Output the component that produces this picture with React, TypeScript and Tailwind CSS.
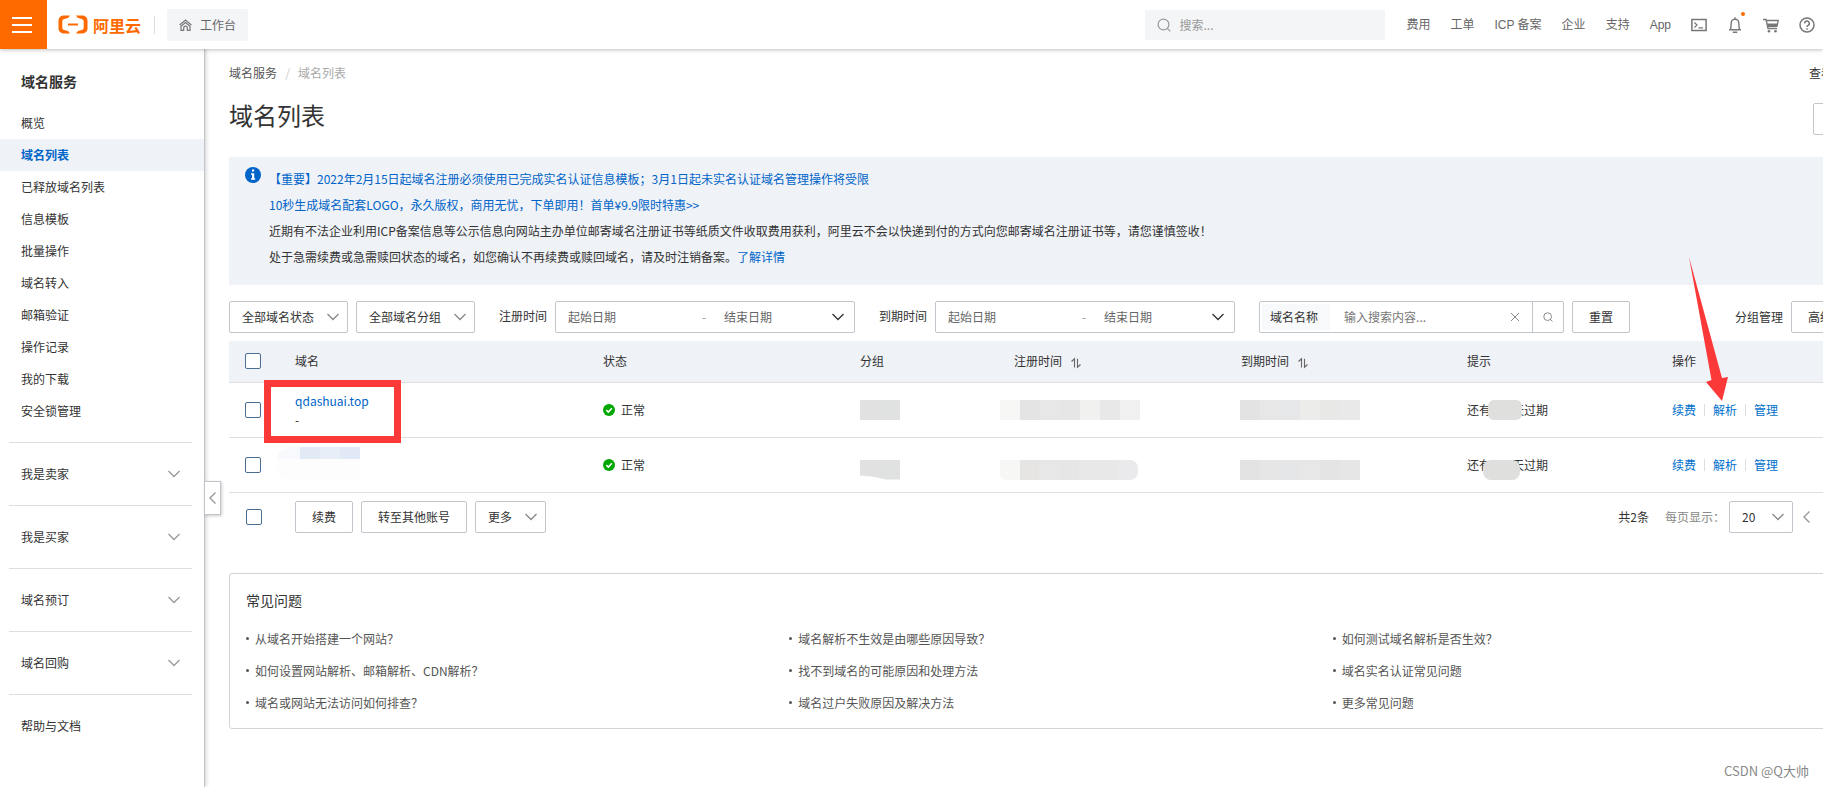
import React from "react";

const menu = ["概览", "域名列表", "已释放域名列表", "信息模板", "批量操作", "域名转入", "邮箱验证", "操作记录", "我的下载", "安全锁管理"];
const groups = ["我是卖家", "我是买家", "域名预订", "域名回购"];
const topLinks = ["费用", "工单", "ICP 备案", "企业", "支持", "App"];
const faq = [
  ["从域名开始搭建一个网站？", "如何设置网站解析、邮箱解析、CDN解析？", "域名或网站无法访问如何排查？"],
  ["域名解析不生效是由哪些原因导致？", "找不到域名的可能原因和处理方法", "域名过户失败原因及解决方法"],
  ["如何测试域名解析是否生效？", "域名实名认证常见问题", "更多常见问题"],
];

type IconProps = { className?: string };

function Chevron({ className = "text-[#888]" }: IconProps) {
  return (
    <svg className={"pointer-events-none h-3 w-3 shrink-0 " + className} viewBox="0 0 12 12" fill="none" stroke="currentColor" strokeWidth="1.3">
      <path d="M.5 3 6 8.5 11.5 3" />
    </svg>
  );
}

function ChevronLeft({ className = "text-[#999]" }: IconProps) {
  return (
    <svg className={"h-3 w-3 shrink-0 " + className} viewBox="0 0 12 12" fill="none" stroke="currentColor" strokeWidth="1.4">
      <path d="M8.5.5 3 6l5.500 5.500" />
    </svg>
  );
}

function Search({ className = "" }: IconProps) {
  return (
    <svg className={className} viewBox="0 0 14 14" fill="none" stroke="currentColor" strokeWidth="1.2">
      <circle cx="6.500" cy="6.500" r="5.400" />
      <path d="M10.300 10.300 13.300 13.300" />
    </svg>
  );
}

function Home() {
  return (
    <svg className="h-3 w-[13px]" viewBox="0 0 13 12" fill="none" stroke="#777" strokeWidth="1.200">
      <path d="M.6 6 6.500 1l5.900 5" />
      <path d="M2 7.200 6.500 3.600 11 7.200M2 6.500v4.800h2.700V9a1.800 1.800 0 0 1 3.600 0v2.300H11V6.500" />
    </svg>
  );
}

function Checkbox({ label }: { label: string }) {
  return (
    <input
      type="checkbox"
      aria-label={label}
      className="block h-4 w-4 appearance-none rounded-[2px] border border-[#4a6d92] bg-white checked:bg-[#0064c8]"
    />
  );
}

function Dropdown({ label, options, className }: { label: string; options: string[]; className: string }) {
  return (
    <div className={"relative flex items-center " + className}>
      <select aria-label={label} className="h-8 w-full appearance-none rounded-[2px] border border-[#c0c6cc] bg-white pl-3 text-[#333]">
        {options.map((o) => (
          <option key={o}>{o}</option>
        ))}
      </select>
      <Chevron className="absolute right-[9px] text-[#888]" />
    </div>
  );
}

function DateRange({ label, id }: { label: string; id: string }) {
  return (
    <div className="ml-6 flex items-center gap-2">
      <label htmlFor={id} className="pb-0.5">{label}</label>
      <div className="flex h-8 w-[300px] items-center rounded-[2px] border border-[#c0c6cc] bg-white pr-2.5 pl-3">
        <input id={id} placeholder="起始日期" className="w-[134px] outline-none placeholder:text-[#666]" />
        <span className="w-[22px] text-[#999]">-</span>
        <input aria-label={label + "结束日期"} placeholder="结束日期" className="w-0 grow outline-none placeholder:text-[#666]" />
        <Chevron className="text-[#333]" />
      </div>
    </div>
  );
}

function Mosaic({ colors, className }: { colors: string[]; className: string }) {
  return (
    <span className={"absolute flex h-5 overflow-hidden " + className}>
      {colors.map((c, i) => (
        <span key={i} className="h-5 w-5" style={{ background: c }} />
      ))}
    </span>
  );
}

function Sort() {
  return (
    <svg className="ml-2 inline h-3 w-3" viewBox="0 0 12 12" fill="none" stroke="#666" strokeWidth="1.100">
      <path d="M1.500 4.500 4.500 1.800V10.500M7.500 1.800v8.400l3-2.700" />
    </svg>
  );
}

type Row = {
  name: React.ReactNode;
  group: React.ReactNode;
  created: React.ReactNode;
  expires: React.ReactNode;
  hint: string;
};

const rows: Row[] = [
  {
    name: (
      <div className="leading-[19px]">
        <a href="#domain" className="text-[#0064c8]">qdashuai.top</a>
        <div>-</div>
      </div>
    ),
    group: <Mosaic className="top-[17px] left-4" colors={["#e1e1e1", "#dfe2e1"]} />,
    created: <Mosaic className="top-[17px] left-0.5" colors={["#f7f7f5", "#e4e4e4", "#e7e7e7", "#e6e6e6", "#f1f1ef", "#e8e8e8", "#f0f0f0"]} />,
    expires: <Mosaic className="top-[17px] left-[15px]" colors={["#e3e3e3", "#e7e7e7", "#e6e7e9", "#ececea", "#e8e8e6", "#e9e9e9"]} />,
    hint: "top-[17px] left-[37px] w-[34px] rounded-md",
  },
  {
    name: (
      <span className="absolute top-[9px] -left-[3px] flex h-[34px] w-[84px] flex-wrap overflow-hidden rounded-l-2xl bg-[#fdfdfe]">
        <span className="h-3 w-6 bg-[#f7f9fd]" />
        <span className="h-3 w-5 bg-[#e2eaf6]" />
        <span className="h-3 w-5 bg-[#e8eef8]" />
        <span className="h-3 w-5 bg-[#e1e9f6]" />
      </span>
    ),
    group: (
      <span className="absolute top-[22px] left-4 flex h-5 [clip-path:polygon(0_0,100%_0,100%_100%,65%_100%,30%_85%,0_80%)]">
        <span className="h-5 w-5 bg-[#e1e1e1]" />
        <span className="h-5 w-5 bg-[#dfe2e1]" />
      </span>
    ),
    created: <Mosaic className="top-[22px] left-0.5 w-[138px] rounded-r-lg rounded-bl-md" colors={["#f7f7f5", "#e6e5e3", "#e7e7e7", "#e6e6e6", "#e8e8e8", "#e8e8e8", "#eaeaec"]} />,
    expires: <Mosaic className="top-[22px] left-[15px]" colors={["#e3e3e3", "#e6e6e6", "#e5e6e8", "#e7e7e7", "#e4e4e4", "#e6e6e6"]} />,
    hint: "top-[22px] left-8 w-[37px] rounded-lg",
  },
];

const button = "h-8 rounded-[2px] border border-[#c0c6cc] bg-white text-[#333]";

export default function App() {
  return (
    <div className="relative flex min-h-screen flex-col overflow-hidden bg-white font-['Noto_Sans_CJK_SC','Noto_Sans',sans-serif] text-xs text-[#333]">
      <header className="z-20 flex h-[49px] shrink-0 items-center bg-white text-[#666] shadow-[0_1px_4px_rgba(0,0,0,0.25)]">
        <button aria-label="菜单" className="flex h-full w-[47px] flex-col items-start justify-center gap-[5px] bg-[#ff6a00] pl-3">
          <span className="h-0.5 w-5 bg-white" />
          <span className="h-0.5 w-5 bg-white" />
          <span className="h-0.5 w-5 bg-white" />
        </button>
        <a href="#home" className="ml-[11px] flex items-center gap-[5px] text-[#ff6a00]">
          <svg className="h-[19px] w-[30px]" viewBox="0 0 30 19" fill="currentColor">
            <path d="M12 .5H5.500A5 5 0 0 0 .5 5.500v8a5 5 0 0 0 5 5H12l-1.600-2.300-4.700-1.400A2 2 0 0 1 4.300 13V6a2 2 0 0 1 1.400-1.800l4.700-1.400Z" />
            <path d="M18 .5h6.500a5 5 0 0 1 5 5v8a5 5 0 0 1-5 5H18l1.600-2.300 4.700-1.400a2 2 0 0 0 1.400-1.800V6a2 2 0 0 0-1.400-1.800l-4.700-1.400Z" />
            <path d="M10 8.500h10v2H10z" />
          </svg>
          <span className="text-base leading-6 font-bold">阿里云</span>
        </a>
        <span className="ml-[13px] h-[18px] w-px bg-[#ddd]" />
        <a href="#workbench" className="ml-3 flex h-8 items-center gap-2 rounded-[2px] bg-[#f4f5f7] px-3">
          <Home />
          工作台
        </a>
        <label className="ml-auto flex h-[30px] w-60 items-center gap-2 bg-[#f4f5f7] pl-3 text-[#999]">
          <Search className="h-3.5 w-3.5" />
          <input aria-label="搜索" placeholder="搜索..." className="w-0 grow bg-transparent outline-none placeholder:text-[#999]" />
        </label>
        <nav className="ml-[21px] flex items-center gap-5 font-['Liberation_Sans','Noto_Sans_CJK_SC',sans-serif]">
          {topLinks.map((t) => (
            <a key={t} href="#top">{t}</a>
          ))}
        </nav>
        <div className="mr-2 ml-5 flex items-center gap-5">
          <button aria-label="Cloud Shell">
            <svg className="block h-4 w-4" viewBox="0 0 16 16" fill="none" stroke="#777" strokeWidth="1.500">
              <path d="M.9 2.500h14.200v11H.9z" />
              <path d="M3.500 5.500 6 8l-2.500 2.500M7.500 10.800h4.500" strokeWidth="1.200" />
            </svg>
          </button>
          <button aria-label="消息" className="relative">
            <svg className="block h-4 w-4" viewBox="0 0 16 16" fill="none" stroke="#777" strokeWidth="1.400">
              <path d="M2 12.700h12M3.700 12.500 4.200 6a3.800 3.800 0 0 1 7.600 0l.5 6.500M8 .3v2M5.700 15.200h4.600" />
            </svg>
            <span className="absolute -top-[5px] -right-[2px] h-1 w-1 rounded-full bg-[#ff6a00]" />
          </button>
          <button aria-label="购物车">
            <svg className="block h-4 w-4" viewBox="0 0 16 16" fill="none" stroke="#777" strokeWidth="1.300">
              <path d="M0 2.500h3l2 9h9M3.500 3.500h11.700L14 9.500" />
              <path d="M4 6.500h10.500L13.800 10H5z" fill="#777" stroke="none" />
              <circle cx="6" cy="14.300" r="1.300" fill="#777" stroke="none" />
              <circle cx="12.500" cy="14.300" r="1.300" fill="#777" stroke="none" />
            </svg>
          </button>
          <button aria-label="帮助">
            <svg className="block h-4 w-4" viewBox="0 0 16 16" fill="none" stroke="#777" strokeWidth="1.500">
              <circle cx="8" cy="8" r="7" />
              <path d="M5.700 6.400a2.300 2.300 0 1 1 3.400 1.900Q8 8.900 8 10M8 11.200v1.500" />
            </svg>
          </button>
        </div>
      </header>

      <div className="flex grow">
        <aside className="relative w-[205px] shrink-0 border-r border-[#c0c6cc] shadow-[1px_0_4px_rgba(0,0,0,0.2)]">
          <h2 className="mt-[21px] px-[21px] text-sm leading-[22px] font-bold">域名服务</h2>
          <ul className="mt-[15px]">
            {menu.map((m, i) => (
              <li key={m}>
                <a
                  href="#menu"
                  className={i === 1 ? "block bg-[#eff2f7] px-[21px] leading-8 font-bold text-[#0064c8]" : "block px-[21px] leading-8"}
                >
                  {m}
                </a>
              </li>
            ))}
          </ul>
          <div className="mt-[15px] mr-3 ml-[9px]">
            {groups.map((g) => (
              <button key={g} className="flex h-[63px] w-full items-center justify-between border-t border-[#dedede] pr-3 pl-3">
                {g}
                <Chevron className="text-[#999]" />
              </button>
            ))}
            <a href="#help" className="flex h-[63px] items-center border-t border-[#dedede] pl-3">帮助与文档</a>
          </div>
          <button
            aria-label="收起菜单"
            className="absolute top-[432px] -right-[17px] flex h-[34px] w-[17px] items-center justify-center border border-[#c0c6cc] bg-white shadow-[1px_1px_3px_rgba(0,0,0,0.2)]"
          >
            <ChevronLeft />
          </button>
        </aside>

        <main className="w-0 grow overflow-hidden pl-6">
          <div className="min-w-[1664px]">
            <div className="mt-4 flex items-center leading-4">
              <a href="#service" className="text-[#555]">域名服务</a>
              <span className="w-[21px] text-center text-[#ccc]">/</span>
              <span className="text-[#aaa]">域名列表</span>
              <a href="#lookup" className="mr-[60px] ml-auto">查看</a>
            </div>
            <div className="mt-[18px] flex items-start">
              <h1 className="text-2xl leading-8">域名列表</h1>
              <button aria-label="更多操作" className={button + " mt-1 ml-auto w-20"} />
            </div>

            <section className="mt-[22px] flex h-32 gap-2 bg-[#eff2f7] pt-[9px] pl-4">
              <svg className="mt-px h-4 w-4 shrink-0" viewBox="0 0 16 16">
                <circle cx="8" cy="8" r="8" fill="#0064c8" />
                <path d="M7 2.500h2.200v2H7zM6 6.300h3.200v5h1v1.400H6v-1.400h1V7.700H6z" fill="#fff" />
              </svg>
              <div className="leading-[26px]">
                <p><a href="#notice" className="text-[#0064c8]">【重要】2022年2月15日起域名注册必须使用已完成实名认证信息模板；3月1日起未实名认证域名管理操作将受限</a></p>
                <p><a href="#logo" className="text-[#0064c8]">10秒生成域名配套LOGO，永久版权，商用无忧，下单即用！首单¥9.9限时特惠&gt;&gt;</a></p>
                <p>近期有不法企业利用ICP备案信息等公示信息向网站主办单位邮寄域名注册证书等纸质文件收取费用获利，阿里云不会以快递到付的方式向您邮寄域名注册证书等，请您谨慎签收！</p>
                <p>处于急需续费或急需赎回状态的域名，如您确认不再续费或赎回域名，请及时注销备案。<a href="#detail" className="text-[#0064c8]">了解详情</a></p>
              </div>
            </section>

            <section className="mt-4 flex items-center">
              <Dropdown label="域名状态" options={["全部域名状态"]} className="w-[119px]" />
              <Dropdown label="域名分组" options={["全部域名分组"]} className="ml-2 w-[119px]" />
              <DateRange label="注册时间" id="created" />
              <DateRange label="到期时间" id="expires" />
              <div className="ml-6 flex h-8 w-[305px] items-center rounded-[2px] border border-[#c0c6cc] pl-0.5">
                <label htmlFor="keyword" className="bg-[#f7f9fa] pr-3 pl-2 leading-[26px]">域名名称</label>
                <input id="keyword" placeholder="输入搜索内容..." className="ml-3.5 w-0 grow outline-none placeholder:text-[#777]" />
                <button aria-label="清除" className="mr-3">
                  <svg className="block h-2.5 w-2.5" viewBox="0 0 10 10" stroke="#888">
                    <path d="M1 1l8 8M9 1 1 9" />
                  </svg>
                </button>
                <button aria-label="搜索域名" className="flex h-full w-[31px] items-center justify-center border-l border-[#c0c6cc] text-[#777]">
                  <Search className="h-2.5 w-2.5" />
                </button>
              </div>
              <button className={button + " ml-2 w-[58px]"}>重置</button>
              <a href="#groups" className="ml-auto">分组管理</a>
              <button className={button + " mr-5 ml-2 px-4"}>高级搜索</button>
            </section>

            <table className="mt-2 w-full table-fixed text-left">
              <colgroup>
                <col className="w-[50px]" />
                <col className="w-[308px]" />
                <col className="w-[257px]" />
                <col className="w-[154px]" />
                <col className="w-[227px]" />
                <col className="w-[226px]" />
                <col className="w-[205px]" />
                <col />
              </colgroup>
              <thead>
                <tr className="h-[41px] border-b border-[#dedede] bg-[#eff2f7] [&>th]:px-4 [&>th]:font-normal">
                  <th><Checkbox label="全选" /></th>
                  <th>域名</th>
                  <th>状态</th>
                  <th>分组</th>
                  <th>注册时间<Sort /></th>
                  <th>到期时间<Sort /></th>
                  <th>提示</th>
                  <th>操作</th>
                </tr>
              </thead>
              <tbody>
                {rows.map((r, i) => (
                  <tr key={i} className="h-[55px] border-b border-[#dedede] [&>td]:relative [&>td]:px-4">
                    <td><Checkbox label={"选择第" + (i + 1) + "行"} /></td>
                    <td>{r.name}</td>
                    <td>
                      <span className="flex items-center gap-1.5">
                        <svg className="h-3 w-3" viewBox="0 0 12 12" fill="none">
                          <circle cx="6" cy="6" r="6" fill="#00a700" />
                          <path d="M3.300 6.200 5.300 8.100 8.900 4.300" stroke="#fff" strokeWidth="1.600" />
                        </svg>
                        正常
                      </span>
                    </td>
                    <td>{r.group}</td>
                    <td>{r.created}</td>
                    <td>{r.expires}</td>
                    <td>
                      <span className="flex">
                        还有<span className="w-[21px]" />天过期
                      </span>
                      <span className={"absolute h-5 bg-[#dfdfdd] " + r.hint} />
                    </td>
                    <td>
                      <span className="flex items-center gap-2 text-[#0070cc]">
                        <a href="#renew">续费</a>
                        <span className="h-3 w-px bg-[#dedede]" />
                        <a href="#dns">解析</a>
                        <span className="h-3 w-px bg-[#dedede]" />
                        <a href="#manage">管理</a>
                      </span>
                    </td>
                  </tr>
                ))}
              </tbody>
            </table>

            <div className="mt-2 flex items-center gap-2 pl-[17px]">
              <Checkbox label="批量选择" />
              <button className={button + " ml-[25px] w-[58px]"}>续费</button>
              <button className={button + " px-4"}>转至其他账号</button>
              <Dropdown label="更多" options={["更多"]} className="w-[71px]" />
              <div className="mr-20 ml-auto flex items-center">
                <span className="mr-4">共2条</span>
                <span className="text-[#888]">每页显示：</span>
                <Dropdown label="每页显示" options={["20"]} className="ml-1 w-16" />
                <button aria-label="上一页" className="ml-2"><ChevronLeft /></button>
              </div>
            </div>

            <section className="mt-10 h-[156px] rounded-[3px] border border-[#d0d3d8] px-4 pt-[15px]">
              <h3 className="text-sm leading-[22px]">常见问题</h3>
              <div className="mt-3 grid grid-cols-3 text-[#555]">
                {faq.map((col, i) => (
                  <ul key={i}>
                    {col.map((q) => (
                      <li key={q} className="flex items-center gap-1.5 leading-8">
                        <span className="h-[3px] w-[3px] rounded-full bg-[#555]" />
                        <a href="#faq">{q}</a>
                      </li>
                    ))}
                  </ul>
                ))}
              </div>
            </section>
          </div>
        </main>
      </div>

      <div className="pointer-events-none absolute top-[380px] left-[264px] h-[63px] w-[137px] border-[7px] border-[#fb3939]" />
      <svg className="pointer-events-none absolute top-[257px] left-[1689px] h-[145px] w-10" viewBox="0 0 40 145">
        <path d="M0 0 33 121 39 120 33 144 17 125 22.500 123Z" fill="#fb3939" />
      </svg>
      <div className="absolute right-3.5 bottom-2 text-[13px] leading-4 text-[#888]">CSDN @Q大帅</div>
    </div>
  );
}
